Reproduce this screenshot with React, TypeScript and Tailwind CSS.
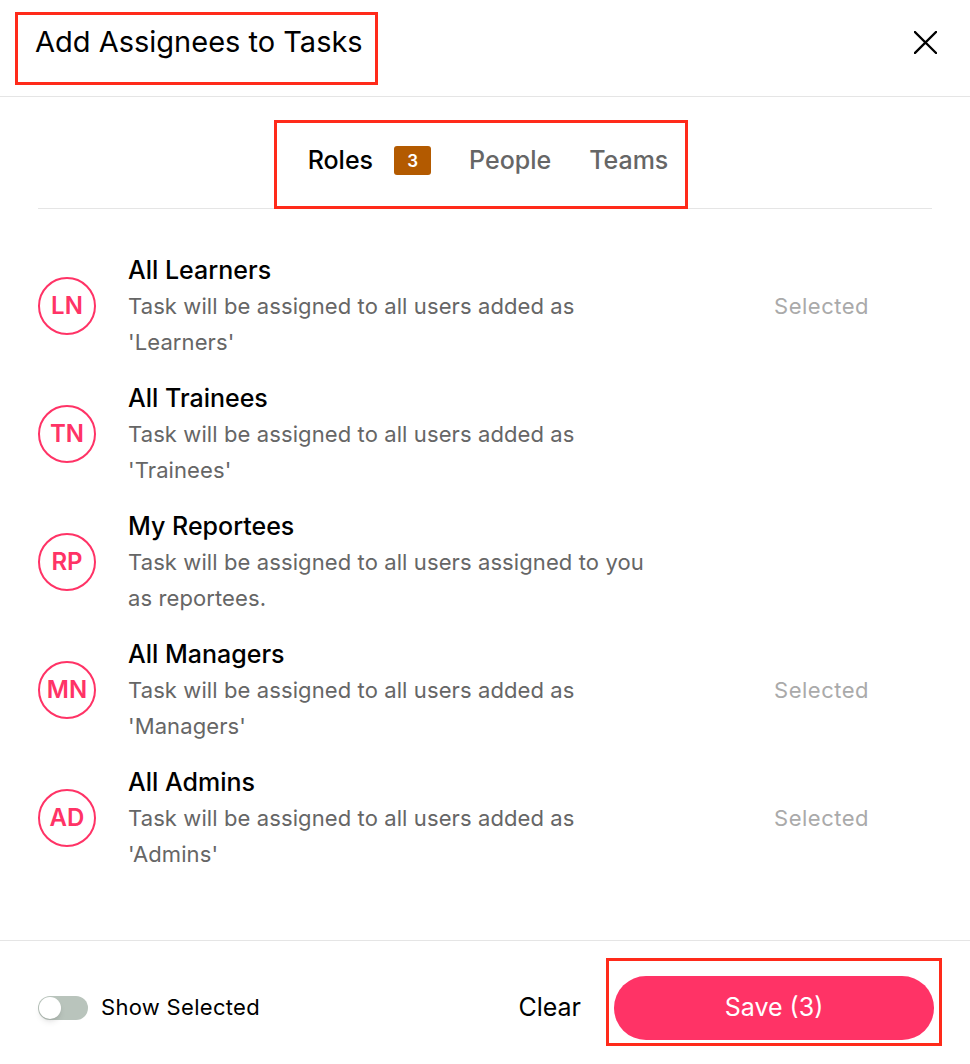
type Role = {
  initials: string;
  title: string;
  lines: string[];
  selected: boolean;
};

const ROLES: Role[] = [
  {
    initials: "LN",
    title: "All Learners",
    lines: ["Task will be assigned to all users added as", "'Learners'"],
    selected: true,
  },
  {
    initials: "TN",
    title: "All Trainees",
    lines: ["Task will be assigned to all users added as", "'Trainees'"],
    selected: false,
  },
  {
    initials: "RP",
    title: "My Reportees",
    lines: ["Task will be assigned to all users assigned to you", "as reportees."],
    selected: false,
  },
  {
    initials: "MN",
    title: "All Managers",
    lines: ["Task will be assigned to all users added as", "'Managers'"],
    selected: true,
  },
  {
    initials: "AD",
    title: "All Admins",
    lines: ["Task will be assigned to all users added as", "'Admins'"],
    selected: true,
  },
];

function RoleRow({ role }: { role: Role }) {
  return (
    <div className="flex items-center">
      <div className="w-[58px] h-[58px] rounded-full border-2 border-[#ff3366] flex items-center justify-center text-[#ff3366] text-[24px] font-semibold shrink-0">
        {role.initials}
      </div>
      <div className="ml-[32px] flex-1">
        <div className="text-[25px] leading-[36px] font-medium text-black">
          {role.title}
        </div>
        {role.lines.map((line) => (
          <div key={line} className="text-[22px] tracking-[0.1px] leading-[36px] text-[#666666]">
            {line}
          </div>
        ))}
      </div>
      {role.selected && (
        <div className="mr-[65px] text-[22px] tracking-[0.5px] text-[#aaaaaa] self-start mt-[36px] leading-[36px]">
          Selected
        </div>
      )}
    </div>
  );
}

export default function App() {
  return (
    <div
      className="relative w-[970px] h-[1064px] bg-white flex flex-col"
      style={{ fontFamily: "Inter, 'Noto Sans', sans-serif" }}
    >
      {/* header */}
      <div className="h-[97px] flex items-center justify-between pl-[35px] pr-[33px] pb-[12px] border-b border-[#e5e5e5] shrink-0">
        <h1 className="text-[29px] text-black font-normal">Add Assignees to Tasks</h1>
        <svg width="23" height="23" viewBox="0 0 24 24" className="text-black">
          <path d="M1 1L23 23M23 1L1 23" stroke="currentColor" strokeWidth="2.4" strokeLinecap="square" />
        </svg>
      </div>

      {/* tabs */}
      <div className="mx-[38px] border-b border-[#e5e5e5] flex justify-center shrink-0">
        <div className="flex items-end gap-[38px] pt-[48px] ml-[5px]">
          <div className="flex items-center gap-[21px] pb-[31px] border-b-[3px] border-[#ff1f4b] -mb-px pl-px">
            <span className="text-[25px] font-medium text-black leading-[30px]">Roles</span>
            <span className="w-[37px] h-[29px] rounded-[3px] bg-[#b35a00] text-white text-[17px] leading-none font-semibold flex items-center justify-center pt-[2px]">
              3
            </span>
          </div>
          <span className="text-[25px] font-medium text-[#666666] leading-[30px] pb-[33px]">People</span>
          <span className="text-[25px] font-medium text-[#666666] leading-[30px] pb-[33px]">Teams</span>
        </div>
      </div>

      {/* list */}
      <div className="flex flex-col gap-[20px] pl-[38px] pr-[36px] pt-[43px]">
        {ROLES.map((role) => (
          <RoleRow key={role.initials} role={role} />
        ))}
      </div>

      <div className="flex-1" />

      {/* footer */}
      <div className="border-t border-[#e5e5e5] h-[124px] flex items-center pl-[38px] pr-[36px] pt-[10px] shrink-0">
        <div className="w-[50px] h-[24px] rounded-full bg-[#b9c4bc] flex items-center px-[1px]">
          <div className="w-[22px] h-[22px] rounded-full bg-white shadow-md" />
        </div>
        <span className="ml-[13px] text-[22px] tracking-[0.3px] text-black">Show Selected</span>
        <div className="flex-1" />
        <span className="text-[25px] text-black">Clear</span>
        <button className="ml-[33px] w-[320px] h-[64px] rounded-full bg-[#ff3366] text-white text-[25px]">
          Save (3)
        </button>
      </div>

      {/* red annotation boxes */}
      <div className="absolute left-[15px] top-[12px] w-[363px] h-[73px] border-[3px] border-[#ff2a1a]" />
      <div className="absolute left-[274px] top-[120px] w-[414px] h-[89px] border-[3px] border-[#ff2a1a]" />
      <div className="absolute left-[606px] top-[958px] w-[336px] h-[88px] border-[3px] border-[#ff2a1a]" />
    </div>
  );
}
